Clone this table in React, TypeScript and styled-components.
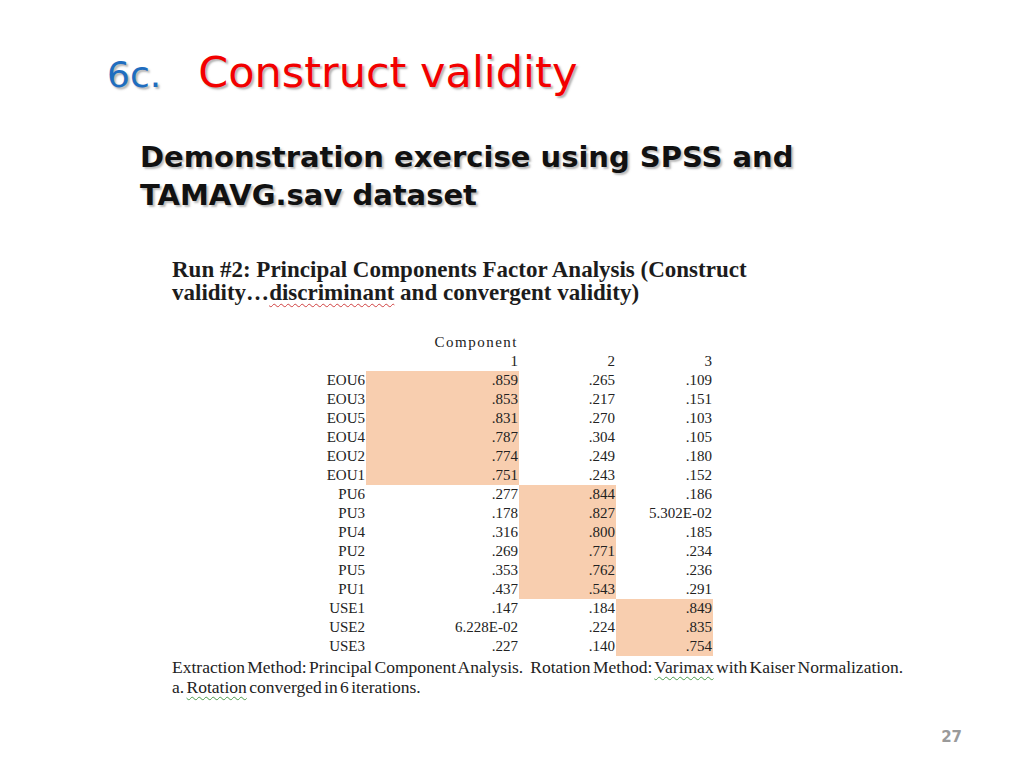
import React from "react";
import styled, { createGlobalStyle } from "styled-components";

const Global = createGlobalStyle`
  html, body { margin: 0; padding: 0; background: #ffffff; }
  #root { width: 1024px; height: 768px; }
`;

const Slide = styled.div`
  width: 1024px;
  height: 768px;
  box-sizing: border-box;
  display: flex;
  flex-direction: column;
  background: #ffffff;
  overflow: hidden;
`;

const TitleRow = styled.h1`
  margin: 0;
  padding: 47px 0 0 107px;
  display: flex;
  align-items: baseline;
  gap: 37px;
  font-family: "DejaVu Sans", "Liberation Sans", sans-serif;
  font-weight: normal;
  line-height: 1.2;
`;

const TitleNum = styled.span`
  color: #1f6dbf;
  font-size: 36px;
  text-shadow: 2px 2px 2px rgba(120, 120, 120, 0.55);
`;

const TitleText = styled.span`
  color: #f20000;
  font-size: 43px;
  text-shadow: 2px 2px 2px rgba(120, 120, 120, 0.55);
`;

const Subtitle = styled.h2`
  margin: 39px 0 0 140px;
  font-family: "DejaVu Sans", "Liberation Sans", sans-serif;
  font-weight: bold;
  font-size: 29px;
  line-height: 38px;
  color: #111111;
  text-shadow: 2px 2px 2px rgba(120, 120, 120, 0.5);
`;

const Figure = styled.div`
  margin: 44px 0 0 172px;
  display: flex;
  flex-direction: column;
  font-family: "Liberation Serif", "DejaVu Serif", serif;
  color: #222222;
`;

const FigureTitle = styled.div`
  font-weight: bold;
  font-size: 23px;
  line-height: 23px;
  color: #1c1c1c;
`;

const Squiggle = styled.span<{ $tone: "red" | "green" }>`
  text-decoration: underline wavy ${(p) => (p.$tone === "red" ? "#d04040" : "#4a9a4a")};
  text-decoration-thickness: 1px;
  text-underline-offset: 3px;
`;

const Table = styled.div`
  margin: 29px 0 0 128px;
  display: grid;
  grid-template-columns: 66px 153px 97px 97px;
  grid-auto-rows: 19px;
  font-size: 15px;
  line-height: 19px;
  align-items: center;
`;

const Cell = styled.div<{ $hl?: boolean; $wide?: boolean }>`
  height: 19px;
  text-align: right;
  padding-right: 1px;
  background: ${(p) => (p.$hl ? "#f8ceaf" : "transparent")};
  white-space: nowrap;
  letter-spacing: ${(p) => (p.$wide ? "1.5px" : "0")};
`;

const FootNote = styled.div`
  margin-top: 1px;
  font-size: 17.5px;
  line-height: 20px;
  color: #222222;
  word-spacing: -2px;
  white-space: nowrap;
`;

const PageNum = styled.div`
  margin-top: auto;
  padding: 0 62px 22px 0;
  text-align: right;
  font-family: "DejaVu Sans", "Liberation Sans", sans-serif;
  font-weight: bold;
  font-size: 15px;
  color: #9a9a9a;
`;

type Row = { label: string; v: [string, string, string]; hl: number };

const rows: Row[] = [
  { label: "EOU6", v: [".859", ".265", ".109"], hl: 0 },
  { label: "EOU3", v: [".853", ".217", ".151"], hl: 0 },
  { label: "EOU5", v: [".831", ".270", ".103"], hl: 0 },
  { label: "EOU4", v: [".787", ".304", ".105"], hl: 0 },
  { label: "EOU2", v: [".774", ".249", ".180"], hl: 0 },
  { label: "EOU1", v: [".751", ".243", ".152"], hl: 0 },
  { label: "PU6", v: [".277", ".844", ".186"], hl: 1 },
  { label: "PU3", v: [".178", ".827", "5.302E-02"], hl: 1 },
  { label: "PU4", v: [".316", ".800", ".185"], hl: 1 },
  { label: "PU2", v: [".269", ".771", ".234"], hl: 1 },
  { label: "PU5", v: [".353", ".762", ".236"], hl: 1 },
  { label: "PU1", v: [".437", ".543", ".291"], hl: 1 },
  { label: "USE1", v: [".147", ".184", ".849"], hl: 2 },
  { label: "USE2", v: ["6.228E-02", ".224", ".835"], hl: 2 },
  { label: "USE3", v: [".227", ".140", ".754"], hl: 2 },
];

export default function App() {
  return (
    <>
      <Global />
      <Slide>
        <TitleRow>
          <TitleNum>6c.</TitleNum>
          <TitleText>Construct validity</TitleText>
        </TitleRow>
        <Subtitle>
          Demonstration exercise using SPSS and
          <br />
          TAMAVG.sav dataset
        </Subtitle>
        <Figure>
          <FigureTitle>
            Run #2: Principal Components Factor Analysis (Construct
            <br />
            validity…<Squiggle $tone="red">discriminant</Squiggle> and convergent validity)
          </FigureTitle>
          <Table>
            <Cell />
            <Cell $wide>Component</Cell>
            <Cell />
            <Cell />
            <Cell />
            <Cell>1</Cell>
            <Cell>2</Cell>
            <Cell>3</Cell>
            {rows.map((r) => (
              <React.Fragment key={r.label}>
                <Cell>{r.label}</Cell>
                {r.v.map((val, i) => (
                  <Cell key={i} $hl={r.hl === i}>
                    {val}
                  </Cell>
                ))}
              </React.Fragment>
            ))}
          </Table>
          <FootNote>
            Extraction Method: Principal Component Analysis.&nbsp;&nbsp; Rotation Method:{" "}
            <Squiggle $tone="green">Varimax</Squiggle> with Kaiser Normalization.
            <br />
            a. <Squiggle $tone="green">Rotation</Squiggle> converged in 6 iterations.
          </FootNote>
        </Figure>
        <PageNum>27</PageNum>
      </Slide>
    </>
  );
}
